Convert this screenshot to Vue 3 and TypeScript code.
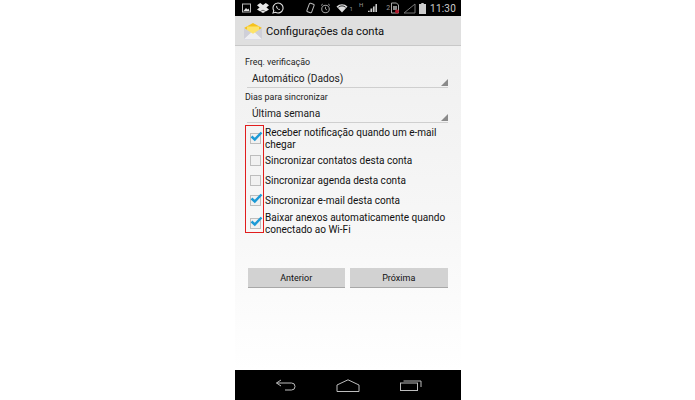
<script setup lang="ts">
interface Option { label: string; checked: boolean }
const options: Option[] = [
  { label: 'Receber notificação quando um e-mail chegar', checked: true },
  { label: 'Sincronizar contatos desta conta', checked: false },
  { label: 'Sincronizar agenda desta conta', checked: false },
  { label: 'Sincronizar e-mail desta conta', checked: true },
  { label: 'Baixar anexos automaticamente quando conectado ao Wi-Fi', checked: true },
]
</script>

<template>
  <div class="page">
    <div class="phone">
      <header class="status">
        <div class="group left">
          <svg width="9" height="10" viewBox="0 0 9 10"><rect x=".5" y="1" width="8" height="8" fill="none" stroke="#bbb" stroke-width="1"/><path d="M1.500 8l2.500-3 1.500 1.500L6.500 5.500 7.500 8z" fill="#ddd"/></svg>
          <svg class="drop" width="12" height="10" viewBox="0 0 12 10"><path d="M3.200 0 6 2 8.800 0 12 2.300 9.400 4.400 12 6.500 8.800 8.500 6 6.700 3.200 8.500 0 6.500 2.600 4.400 0 2.300z" fill="#e8e8e8"/><path d="M3.500 8.800 6 7.200l2.500 1.600L6 10z" fill="#e8e8e8"/></svg>
          <svg class="wa" width="12" height="12" viewBox="0 0 12 12"><path d="M6 1a5 5 0 0 0-4.200 7.600L1 11l2.500-.7A5 5 0 1 0 6 1z" fill="none" stroke="#ddd" stroke-width="1.100"/><path d="M4.300 3.800c-.6.800 0 2 .9 3s2.100 1.500 2.800.9l-.7-1-.7.300-1.300-1.300.3-.8z" fill="#ddd"/></svg>
        </div>
        <div class="group right">
          <svg width="9" height="12" viewBox="0 0 9 12"><rect x="2" y="1.500" width="5" height="9" rx="1" transform="rotate(20 4.500 6)" fill="none" stroke="#bbb"/></svg>
          <svg class="gap-a" width="11" height="11" viewBox="0 0 11 11"><circle cx="5.500" cy="6" r="3.800" fill="none" stroke="#999" stroke-width="1.100"/><path d="M5.500 3.800V6l1.500 1M1 2.500 2.800 1M10 2.500 8.200 1" fill="none" stroke="#999"/></svg>
          <svg class="gap-b" width="12" height="10" viewBox="0 0 12 10"><path d="M6 9.500.5 3.500a8 8 0 0 1 11 0z" fill="#ddd"/><path d="M2.400 4.300a5.300 5.300 0 0 1 7.200 0" stroke="#000" stroke-width=".8" fill="none"/></svg>
          <span class="tiny sim1">1</span>
          <span class="tiny h">H</span>
          <svg width="11" height="10" viewBox="0 0 11 10"><path d="M10 1v8H1z" fill="#333"/><path d="M1 9h1.500V7.700H1zM3.500 9H5V5.500H3.500zM6 9h1.500V3.500H6zM8.500 9H10V1H8.500z" fill="#ccc"/></svg>
          <span class="tiny sim2">2</span>
          <svg width="8" height="12" viewBox="0 0 8 12"><path d="M.5 1h5l2 2v8H.5z" fill="none" stroke="#aaa"/><rect x="2" y="4" width="4" height="4" fill="#888"/><circle cx="6" cy="9.500" r="2" fill="#b2182b"/></svg>
          <svg class="gap-c" width="13" height="11" viewBox="0 0 13 11"><path d="M12 1v9H1z" fill="none" stroke="#777"/></svg>
          <svg class="gap-d" width="7" height="11" viewBox="0 0 7 11"><path d="M2.300 0h2.400v1H7v10H0V1h2.300z" fill="#ccc"/></svg>
          <span class="time">11:30</span>
        </div>
      </header>

      <div class="actionbar">
        <svg width="20" height="17" viewBox="0 0 20 17">
          <rect x="1" y="4" width="18" height="13" fill="#dcdce4"/>
          <path d="M1 5 10 0l9 5-9 6z" fill="#f6c21c"/>
          <path d="M4 3.500h12V8l-6 3.500L4 8z" fill="#fde36a"/>
          <path d="M1 16l7-6.500 2 1.300 2-1.300 7 6.500z" fill="#eeeef2"/>
          <path d="M1 5v11l7-6.500zM19 5v11l-7-6.500z" fill="#cfcfd8"/>
        </svg>
        <h1>Configurações da conta</h1>
      </div>

      <main class="content">
        <label class="field-label">Freq. verificação</label>
        <div class="select">Automático (Dados)<i class="corner"></i></div>
        <label class="field-label second">Dias para sincronizar</label>
        <div class="select">Última semana<i class="corner"></i></div>

        <ul class="options">
          <li v-for="o in options" :key="o.label" class="option">
            <span class="box">
              <svg v-if="o.checked" class="tick" width="13" height="11" viewBox="0 0 13 11"><path d="M1.500 5.500 4.800 8.500 11.500 1.500" fill="none" stroke="#1c9ad6" stroke-width="2.400"/></svg>
            </span>
            <span class="option-text">{{ o.label }}</span>
          </li>
          <li class="marker" aria-hidden="true"></li>
        </ul>

        <div class="buttons">
          <button type="button">Anterior</button>
          <button type="button">Próxima</button>
        </div>
      </main>

      <footer class="nav">
        <svg width="21" height="12" viewBox="0 0 21 12"><path d="M6 1 1.500 4 6 7M1.500 4H16.500a3.500 3.500 0 0 1 0 7H10" fill="none" stroke="#bdbdbd" stroke-width="1"/></svg>
        <svg width="24" height="13" viewBox="0 0 24 13"><path d="M12 .8 1 6v6.500h22V6z" fill="none" stroke="#bdbdbd" stroke-width="1"/></svg>
        <svg width="22" height="12" viewBox="0 0 22 12"><rect x=".5" y="4" width="17" height="7.500" fill="none" stroke="#bdbdbd"/><path d="M3.500 2h17.500v6" fill="none" stroke="#bdbdbd"/></svg>
      </footer>
    </div>
  </div>
</template>

<style>
html, body { margin: 0; background: #fff; }
</style>

<style scoped>
.page {
  width: 695px;
  height: 400px;
  display: flex;
  justify-content: center;
  background: #fff;
  font-family: Roboto, "Liberation Sans", sans-serif;
  overflow: hidden;
}
.phone {
  width: 226px;
  height: 400px;
  margin-left: 1px;
  display: flex;
  flex-direction: column;
}
.status {
  height: 16px;
  flex: none;
  background: #000;
  color: #ccc;
  display: flex;
  align-items: center;
  justify-content: space-between;
  padding: 0 0 0 7px;
}
.group { display: flex; align-items: center; }
.drop { margin-left: 6px; }
.wa { margin-left: 3px; }
.right { padding-right: 5px; }
.tiny { font-size: 6px; color: #999; }
.gap-a { margin-left: 5px; }
.gap-b { margin-left: 5px; }
.sim1 { margin: 0 6px 0 2px; }
.h { margin: -8px 4px 0 0; }
.sim2 { margin: 0 1px 0 8px; font-size: 7px; }
.gap-c { margin-left: 4px; }
.gap-d { margin-left: 3px; }
.time { margin-left: 4px; font-size: 10px; color: #ccc; letter-spacing: .2px; }
.actionbar {
  height: 30px;
  box-sizing: border-box;
  flex: none;
  background: #dfdfdf;
  border-bottom: 1px solid #c8c8c8;
  display: flex;
  align-items: center;
  gap: 3px;
  padding: 1px 0 0 8px;
}
h1 {
  margin: 0;
  font-size: 11.200px;
  font-weight: 400;
  color: #0e0e0e;
}
.content {
  flex: 1;
  min-height: 0;
  background: linear-gradient(#f0f0f0 0%, #f6f6f6 50%, #ffffff 100%);
  padding: 10px 13px 0 10px;
  display: flex;
  flex-direction: column;
}
.field-label {
  font-size: 8.900px;
  line-height: 12px;
  color: #222;
}
.second { margin-top: 3px; }
.select {
  position: relative;
  height: 18px;
  line-height: 20px;
  margin: 1px 0 0 2px;
  padding-left: 5px;
  font-size: 10.200px;
  color: #1a1a1a;
  border-bottom: 1px solid #cfcfcf;
}
.corner {
  position: absolute;
  right: 0;
  bottom: 1px;
  width: 0;
  height: 0;
  border-left: 7px solid transparent;
  border-bottom: 7px solid #8a8a8a;
}
.options {
  position: relative;
  list-style: none;
  margin: 3px 0 0;
  padding: 0;
}
.option {
  display: flex;
  align-items: center;
  height: 20px;
  font-size: 10.050px;
  line-height: 12px;
  color: #111;
}
.option:first-child { height: 24px; }
.option:nth-child(5) { height: 26px; }
.box {
  position: relative;
  flex: none;
  width: 9px;
  height: 9px;
  margin: 1px 4px 0 5px;
  border: 1px solid #bdbdbd;
  background: #f1f1f1;
}
.tick {
  position: absolute;
  left: -1px;
  top: -3px;
}
.option-text { display: block; width: 184px; padding-top: 2px; }
.marker {
  position: absolute;
  left: 0;
  top: -1px;
  width: 17px;
  height: 106px;
  border: 1px solid #e11d1d;
  pointer-events: none;
}
.buttons {
  display: flex;
  gap: 5px;
  margin: 32px 0 0 2.500px;
}
button {
  width: 97.500px;
  height: 20px;
  padding: 0;
  border: 0;
  border-bottom: 1px solid #a8a8a8;
  background: #d2d2d2;
  font: 400 9px Roboto, "Liberation Sans", sans-serif;
  color: #111;
}
.nav {
  height: 30px;
  flex: none;
  background: #000;
  display: flex;
  align-items: center;
  gap: 40px;
  padding: 0 0 0 40px;
}
</style>
